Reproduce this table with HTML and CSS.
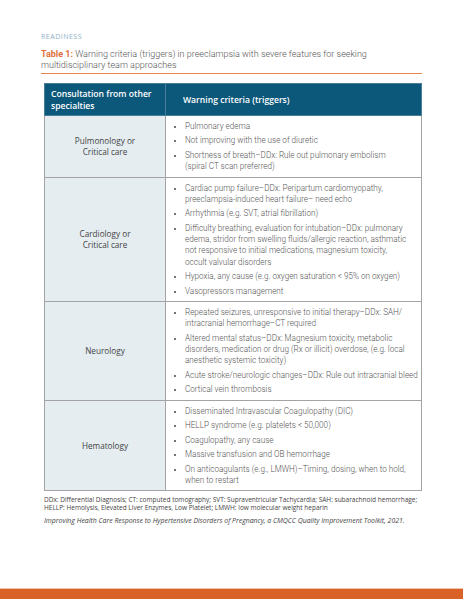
FILE: index.html
```html
<!DOCTYPE html>
<html lang="en">

<head>
    <meta charset="UTF-8">
    <meta name="viewport" content="width=device-width, initial-scale=1.0">
    <title>Readiness - Table 1</title>
    <link rel="stylesheet" href="styles.css">
</head>

<body>

    <div class="page">
        <div class="section-label">READINESS</div>

        <!-- Judul tabel -->
        <p class="caption"><b>Table 1:</b> <span>Warning criteria (triggers) in preeclampsia with severe features for seeking</span><br><span>multidisciplinary team approaches</span></p>

        <table class="criteria">
            <thead>
                <tr>
                    <th class="col-spec">Consultation from other specialties</th>
                    <th class="col-warn">Warning criteria (triggers)</th>
                </tr>
            </thead>
            <tbody>
                <tr>
                    <td class="spec">Pulmonology or<br>Critical care</td>
                    <td>
                        <ul>
                            <li>Pulmonary edema</li>
                            <li>Not improving with the use of diuretic</li>
                            <li>Shortness of breath–DDx: Rule out pulmonary embolism<br>(spiral CT scan preferred)</li>
                        </ul>
                    </td>
                </tr>
                <tr>
                    <td class="spec">Cardiology or<br>Critical care</td>
                    <td>
                        <ul>
                            <li>Cardiac pump failure–DDx: Peripartum cardiomyopathy,<br>preeclampsia-induced heart failure– need echo</li>
                            <li>Arrhythmia (e.g. SVT, atrial fibrillation)</li>
                            <li>Difficulty breathing, evaluation for intubation–DDx: pulmonary<br>edema, stridor from swelling fluids/allergic reaction, asthmatic<br>not responsive to initial medications, magnesium toxicity,<br>occult valvular disorders</li>
                            <li>Hypoxia, any cause (e.g. oxygen saturation &lt; 95% on oxygen)</li>
                            <li>Vasopressors management</li>
                        </ul>
                    </td>
                </tr>
                <tr>
                    <td class="spec">Neurology</td>
                    <td>
                        <ul>
                            <li>Repeated seizures, unresponsive to initial therapy–DDx: SAH/<br>intracranial hemorrhage–CT required</li>
                            <li>Altered mental status–DDx: Magnesium toxicity, metabolic<br>disorders, medication or drug (Rx or illicit) overdose, (e.g. local<br>anesthetic systemic toxicity)</li>
                            <li>Acute stroke/neurologic changes–DDx: Rule out intracranial bleed</li>
                            <li>Cortical vein thrombosis</li>
                        </ul>
                    </td>
                </tr>
                <tr>
                    <td class="spec">Hematology</td>
                    <td>
                        <ul>
                            <li>Disseminated Intravascular Coagulopathy (DIC)</li>
                            <li>HELLP syndrome (e.g. platelets &lt; 50,000)</li>
                            <li>Coagulopathy, any cause</li>
                            <li>Massive transfusion and OB hemorrhage</li>
                            <li>On anticoagulants (e.g., LMWH)–Timing, dosing, when to hold,<br>when to restart</li>
                        </ul>
                    </td>
                </tr>
            </tbody>
        </table>

        <p class="notes">DDx: Differential Diagnosis; CT: computed tomography; SVT: Supraventricular Tachycardia; SAH: subarachnoid hemorrhage; HELLP: Hemolysis, Elevated Liver Enzymes, Low Platelet; LMWH: low molecular weight heparin</p>
        <p class="source">Improving Health Care Response to Hypertensive Disorders of Pregnancy, a CMQCC Quality Improvement Toolkit, 2021.</p>
    </div>

    <div class="footer-bar"></div>

</body>

</html>
```

FILE: styles.css
```css
/* Halaman dasar */
body {
    margin: 0;
    padding: 0;
    background-color: #fff;
    font-family: Roboto, "Open Sans", sans-serif;
    min-height: 599px;
    display: flex;
    flex-direction: column;
}

.page {
    padding: 33px 41px 0 41px;
    width: 381px;
}

.section-label {
    font-family: "Open Sans", sans-serif;
    font-size: 7px;
    line-height: 8px;
    letter-spacing: 0.5px;
    color: #8eb0c6;
}

/* Judul tabel dengan garis oranye */
.caption {
    margin: 8px 0 0 0;
    padding-bottom: 3px;
    border-bottom: 1.5px solid #e8834e;
    font-size: 9px;
    line-height: 10.5px;
    font-weight: 300;
    color: #555;
    white-space: nowrap;
}

.caption b {
    font-weight: 700;
    color: #e0703a;
}

/* Tabel kriteria */
.criteria {
    margin: 9px 0 0 3px;
    width: 378px;
    border-collapse: collapse;
    border: 1px solid #a3a3a3;
    table-layout: fixed;
}

.criteria th {
    background-color: #0c587b;
    color: #fff;
    font-family: "Open Sans", sans-serif;
    font-weight: 600;
    font-size: 8.6px;
    line-height: 12px;
    text-align: left;
    padding: 4px 6px 3px 6px;
    border: 1px solid #4a7d98;
}

.criteria th.col-spec {
    width: 108px;
}

.criteria th.col-warn {
    padding-left: 17px;
}

.criteria td {
    vertical-align: top;
    border: 1px solid #a3a3a3;
    padding: 5px 3px 4px 0;
}

.criteria td.spec {
    background-color: #e5edf1;
    vertical-align: middle;
    text-align: center;
    padding: 0;
    font-family: "Open Sans", sans-serif;
    font-size: 8.2px;
    line-height: 11.5px;
    color: #444;
}

.criteria ul {
    margin: 0;
    padding-left: 19px;
}

.criteria li {
    font-size: 8.15px;
    line-height: 11.3px;
    font-weight: 300;
    color: #555;
    white-space: nowrap;
    margin-bottom: 3.2px;
}

.criteria li:last-child {
    margin-bottom: 0;
}

.criteria li::marker {
    font-size: 7px;
    color: #444;
}

/* Catatan kaki */
.notes {
    margin: 5px 0 0 3px;
    font-family: "Open Sans", sans-serif;
    font-size: 6.5px;
    line-height: 7.5px;
    color: #444;
}

.source {
    margin: 6px 0 0 3px;
    font-family: "Open Sans", sans-serif;
    font-style: italic;
    font-size: 6.9px;
    line-height: 8px;
    color: #444;
}

.footer-bar {
    margin-top: auto;
    height: 10px;
    background-color: #d96229;
    border-top: 1px solid #f0c2a6;
}
```
